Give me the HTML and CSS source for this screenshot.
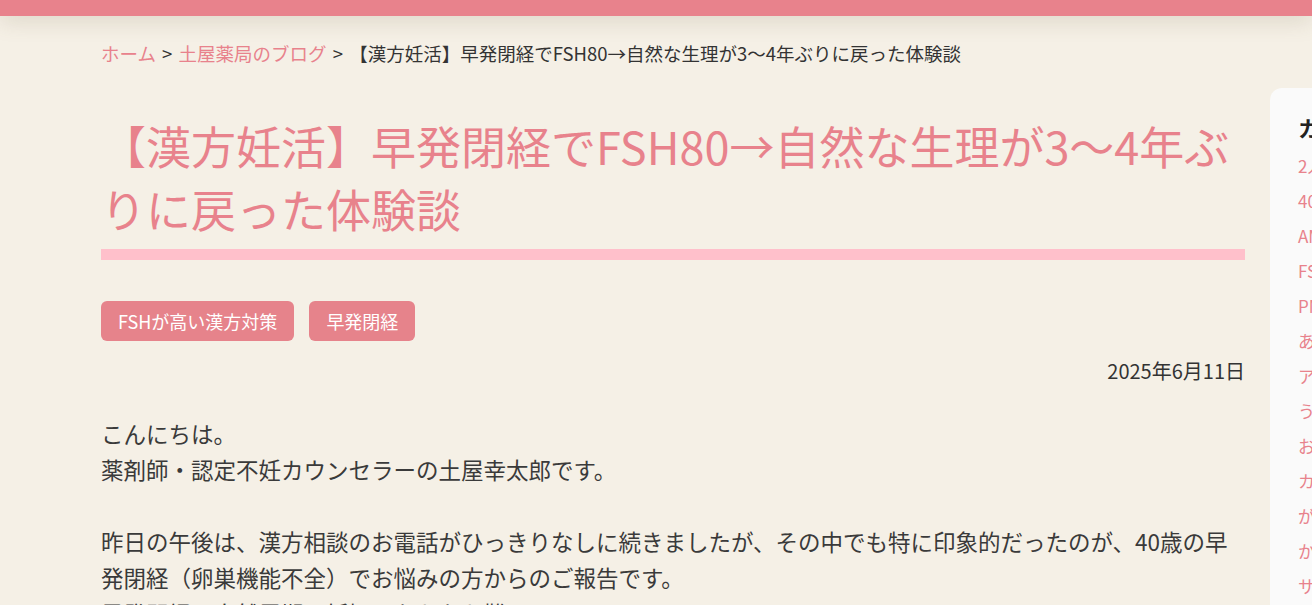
FILE: index.html
```html
<!DOCTYPE html>
<html lang="ja">
 <head>
   <meta charset="utf-8"/>
   <title>【漢方妊活】早発閉経でFSH80→自然な生理が3〜4年ぶりに戻った体験談</title>
   <link rel="stylesheet" href="styles.css">
 </head>

 <body>
   <header id="topBar"></header>

   <div id="wrap">
      <div id="content">
         <nav class="breadcrumb">
            <a href="#">ホーム</a>
            <span class="sep">&gt;</span>
            <a href="#">土屋薬局のブログ</a>
            <span class="sep">&gt;</span>
            <span class="current">【漢方妊活】早発閉経でFSH80→自然な生理が3〜4年ぶりに戻った体験談</span>
         </nav>

         <div class="columns">
            <article class="post">
               <h1 class="post_title">【漢方妊活】早発閉経でFSH80→自然な生理が3〜4年ぶりに戻った体験談</h1>

               <ul class="tags">
                  <li><a href="#">FSHが高い漢方対策</a></li>
                  <li><a href="#">早発閉経</a></li>
               </ul>

               <p class="date">2025年6月11日</p>

               <div class="post_body">
                  <p>
                     こんにちは。<br>
                     薬剤師・認定不妊カウンセラーの土屋幸太郎です。
                  </p>
                  <p>
                     昨日の午後は、漢方相談のお電話がひっきりなしに続きましたが、その中でも特に印象的だったのが、40歳の早発閉経（卵巣機能不全）でお悩みの方からのご報告です。<br>
                     早発閉経で自然周期の妊娠はなかなか難しい
                  </p>
               </div>
            </article>

            <aside class="sidebar">
               <h3>カテゴリー</h3>
               <ul>
                  <li><a href="#">2人目不妊</a></li>
                  <li><a href="#">40代の妊活</a></li>
                  <li><a href="#">AMH</a></li>
                  <li><a href="#">FSHが高い漢方対策</a></li>
                  <li><a href="#">PMS</a></li>
                  <li><a href="#">あせも</a></li>
                  <li><a href="#">アトピー</a></li>
                  <li><a href="#">うつ</a></li>
                  <li><a href="#">お知らせ</a></li>
                  <li><a href="#">カンジダ</a></li>
                  <li><a href="#">がん</a></li>
                  <li><a href="#">かぜ</a></li>
                  <li><a href="#">サプリメント</a></li>
               </ul>
            </aside>
         </div>
      </div>
   </div>
 </body>
</html>
```

FILE: styles.css
```css
/*####### reset #######*/
   *{margin:0; padding:0; box-sizing:border-box;}
   ul{list-style:none;}
   a{text-decoration:none;}

   html,body{overflow:hidden;}
   body{background-color:#f5f0e6; color:#333; font-family:"Noto Sans CJK JP", "Noto Sans", sans-serif; height:605px;}

/*####### top bar #######*/
   #topBar{height:16px; background-color:#e8828c; box-shadow:0 4px 22px rgba(120,100,70,.22); position:relative;}

   #wrap{width:1600px; padding-left:101px;}

/*####### breadcrumb #######*/
   .breadcrumb{font-size:18.5px; line-height:26px; padding-top:24px; color:#333; white-space:nowrap;}
   .breadcrumb a{color:#e8828c;}
   .breadcrumb .sep{margin:0 2px;}

/*####### columns #######*/
   .columns{display:flex; gap:25px; align-items:flex-start;}
   .post{width:1144px; flex:none;}

   .post_title{font-size:45px; line-height:63px; font-weight:400; color:#e8828c; margin-top:48px; padding-bottom:9px; border-bottom:11px solid #ffc0cb;}

   /* tags */
   .tags{display:flex; gap:15px; margin-top:41px;}
   .tags a{display:block; background-color:#e6838b; color:#fff; font-size:18px; line-height:24px; padding:8px 17px; border-radius:6px;}

   .date{text-align:right; font-size:20px; line-height:30px; margin-top:15px; color:#333;}

   /* body */
   .post_body{margin-top:29px; font-size:22.5px; line-height:36px; color:#3a3a3a;}
   .post_body p{margin-bottom:36px;}

/*####### sidebar #######*/
   .sidebar{width:300px; flex:none; margin-top:22px; background-color:#fafafa; border-radius:12px; padding:22px 28px; min-height:600px;}
   .sidebar h3{font-size:22px; line-height:34px; font-weight:700; color:#222; margin-bottom:4px;}
   .sidebar li{font-size:17px; line-height:35px;}
   .sidebar li a{color:#e8828c;}
```
